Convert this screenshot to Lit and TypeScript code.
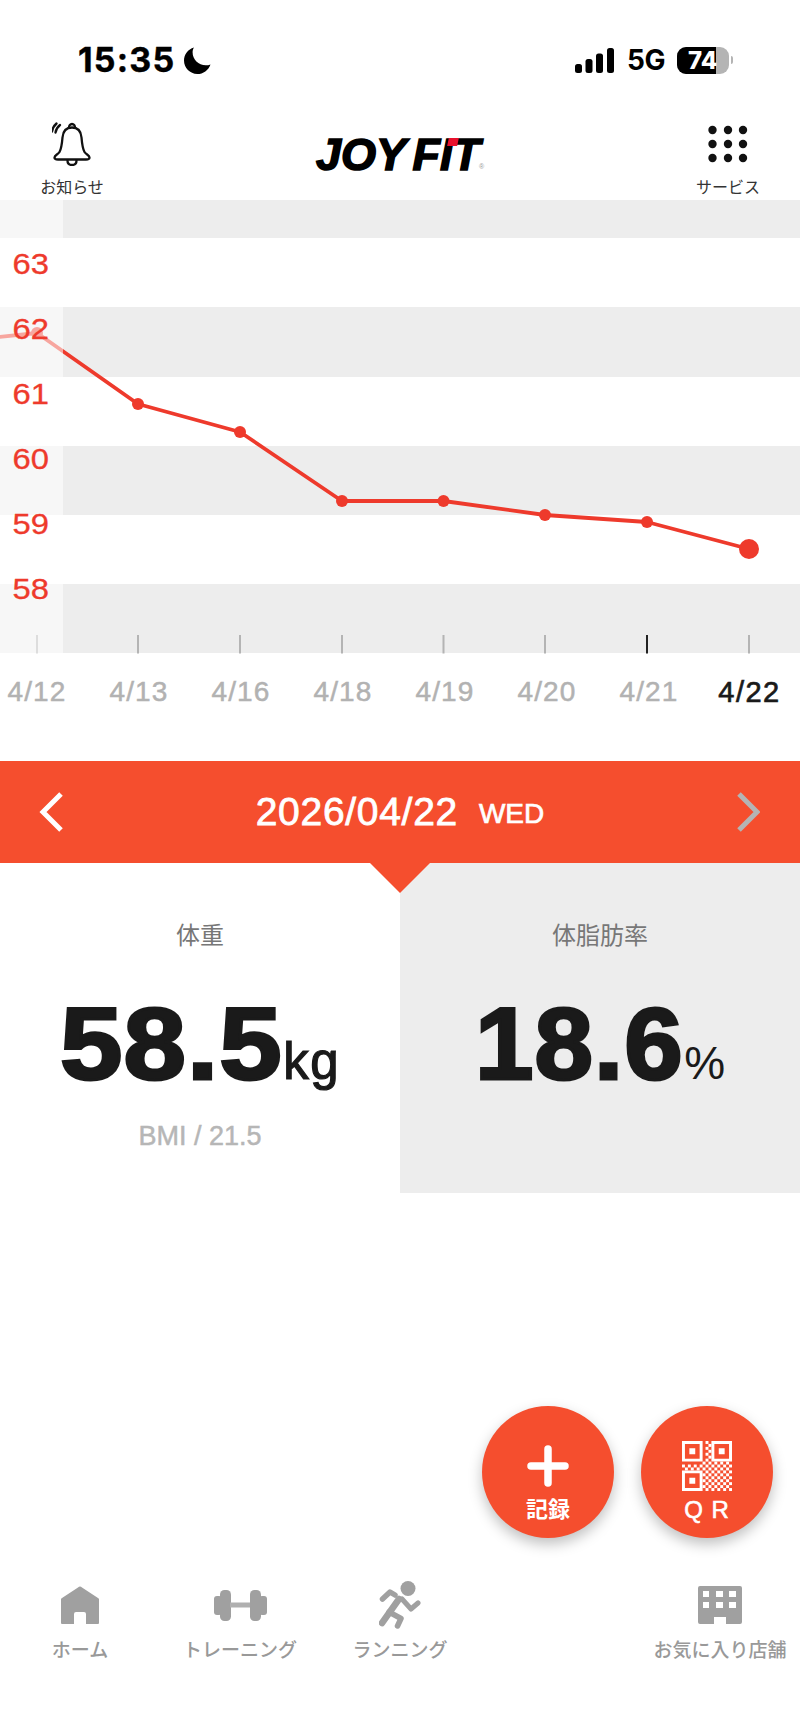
import { LitElement, html, css, svg } from "lit";
import { customElement } from "lit/decorators.js";

const POINTS: [number, number][] = [
  [-10, 338], [37, 333], [138, 404], [240, 432], [342, 501], [443.5, 501], [545, 515], [647, 522], [749, 549],
];
const DATES = ["4/12", "4/13", "4/16", "4/18", "4/19", "4/20", "4/21", "4/22"];
const YS = ["63", "62", "61", "60", "59", "58"];

function qrCells() {
  const n = 17;
  const cells: [number, number][] = [];
  const finder = (x: number, y: number) => x < 7 && y < 7;
  for (let y = 0; y < n; y++) {
    for (let x = 0; x < n; x++) {
      if (finder(x, y) || finder(n - 1 - x, y) || finder(x, n - 1 - y)) continue;
      if (y < 7 || x < 7 ? (x + y) % 2 === 0 && (x >= 8 && x <= 9 || y >= 8 && y <= 9) : (x + y) % 2 === 0) cells.push([x, y]);
    }
  }
  return cells;
}

@customElement("app-root")
export class AppRoot extends LitElement {
  static styles = css`
    :host { display: block; font-family: "Liberation Sans", "Noto Sans CJK JP", sans-serif; background: #fff; }
    .page { position: relative; height: 1734px; overflow: hidden; display: flex; flex-direction: column; background: #fff; }
    .status { height: 100px; box-sizing: border-box; padding: 44px 67px 0 78px; display: flex; align-items: flex-start; }
    .time { font: 700 34px/32px Inter, sans-serif; color: #000; letter-spacing: 1.2px; -webkit-text-stroke: .4px #000; }
    .moon { margin-left: 9px; margin-top: 3px; }
    .right { margin-left: auto; display: flex; align-items: center; height: 32px; }
    .net { font: 700 28px/32px Inter, sans-serif; color: #000; margin: 0 12px 0 13px; letter-spacing: -0.5px; }
    .batt { width: 52px; height: 27px; border-radius: 9px; overflow: hidden; display: flex; background: #b4b4b4; position: relative; }
    .batt-fill { width: 39px; background: #000; }
    .batt-num { position: absolute; left: 11px; top: 0; font: 800 24px/27px Inter, sans-serif; color: #fff; }
    .nub { width: 2px; height: 8px; background: #b4b4b4; border-radius: 0 2px 2px 0; margin-left: 2px; }

    .nav { height: 100px; display: grid; grid-template-columns: 144px 1fr 144px; }
    .nav-item { display: flex; flex-direction: column; align-items: center; font: 400 16px/20px "Noto Sans CJK JP", sans-serif; color: #333; padding-top: 22px; box-sizing: border-box; }
    .nav-item span { margin-top: 10px; }
    .nav-icon { height: 44px; display: block; }
    .nav-logo { display: flex; justify-content: center; padding: 31px 4px 0 0; }
    .logo { position: relative; font: italic 700 45px/48px "Liberation Sans", sans-serif; color: #000; -webkit-text-stroke: 1.6px #000; word-spacing: -5px; height: 48px; }
    .logo-red { position: absolute; left: 132px; top: 7px; width: 10px; height: 8px; background: #e8112d; transform: skewX(-12deg); }
    .logo-r { position: absolute; left: 163px; top: 32px; font: 400 7px/8px "Liberation Sans", sans-serif; color: #999; -webkit-text-stroke: 0; }

    .chart { position: relative; height: 454px; }
    .bands { display: flex; flex-direction: column; height: 100%; }
    .band { height: 69.2px; flex: none; }
    .band.first { height: 38.2px; }
    .band.gray { background: #ededed; }
    .ticks-svg { position: absolute; left: 0; top: 0; }
    .axis { position: absolute; left: 0; top: 0; bottom: 0; width: 63px; background: rgba(255,255,255,.55); box-sizing: border-box; padding-top: 32px; }
    .axis div { height: 65px; line-height: 65px; width: 49px; text-align: right; font-size: 29px; color: #ee3a2c; -webkit-text-stroke: .3px #ee3a2c; transform: scaleX(1.13); transform-origin: right center; }

    .dates { height: 107px; display: grid; grid-template-columns: repeat(8, 102px); margin-left: -14px; width: 816px; padding-top: 19px; box-sizing: border-box; }
    .dates div { text-align: center; font-size: 28px; line-height: 38px; letter-spacing: 1.1px; color: #b2b2b2; -webkit-text-stroke: .5px #b2b2b2; }
    .dates div.on { color: #1a1a1a; font-size: 29px; letter-spacing: 1.5px; margin-left: -3px; -webkit-text-stroke: .7px #1a1a1a; }

    .bar { height: 102px; background: #f54e2e; display: flex; align-items: center; justify-content: center; position: relative; color: #fff; }
    .bar-date { font-size: 39px; letter-spacing: .7px; -webkit-text-stroke: .8px #fff; }
    .bar-day { font-size: 28px; margin-left: 21px; margin-top: 4px; -webkit-text-stroke: .7px #fff; }
    .chev { position: absolute; top: 31px; }
    .chev.l { left: 38px; }
    .chev.r { right: 40px; }
    .arrow { position: absolute; left: 370px; top: 102px; width: 0; height: 0; border: solid transparent; border-width: 30px 30px 0 30px; border-top-color: #f54e2e; }

    .panels { display: grid; grid-template-columns: 400px 400px; height: 330px; }
    .panel { display: flex; flex-direction: column; align-items: center; padding-top: 59px; box-sizing: border-box; }
    .panel.gray { background: #ededed; }
    .panel-label { font: 400 24px/24px "Noto Sans CJK JP", sans-serif; color: #777; height: 24px; }
    .value { margin-top: 39px; display: flex; align-items: baseline; color: #1a1a1a; height: 118px; }
    .num { display: inline-block; font-size: 102px; line-height: 118px; font-weight: 700; letter-spacing: 1px; -webkit-text-stroke: 3px #1a1a1a; transform: scaleX(1.03); transform-origin: left center; margin-right: 7px; }
    .num.wide { transform: scaleX(1.1); margin-right: 21px; }
    .unit-kg { font-size: 51px; letter-spacing: 1.5px; -webkit-text-stroke: 1.2px #1a1a1a; }
    .unit-pc { font-size: 46px; margin-left: 0; }
    .bmi { margin-top: 18px; font-size: 27px; line-height: 30px; color: #b6b6b6; -webkit-text-stroke: .5px #b6b6b6; }

    .spacer { flex: 1; }
    .fab { position: absolute; top: 1406px; width: 132px; height: 132px; border-radius: 50%; background: #f54e2e; box-shadow: 0 6px 14px rgba(0,0,0,.25); color: #fff; display: flex; flex-direction: column; align-items: center; box-sizing: border-box; }
    .fab.a { left: 482px; padding-top: 39px; }
    .fab.b { left: 641px; padding-top: 35px; }
    .fab-label { font: 700 22px/24px "Noto Sans CJK JP", sans-serif; margin-top: 8px; }
    .fab-label.qr { font: 400 24px/24px "Liberation Sans", sans-serif; -webkit-text-stroke: .6px #fff; margin-top: 7px; letter-spacing: 1px; word-spacing: 0; }
    .fab svg { display: block; }

    .tabs { height: 154px; display: grid; grid-template-columns: repeat(5, 160px); box-sizing: border-box; }
    .tab { display: flex; flex-direction: column; align-items: center; }
    .tab-icon { height: 50px; display: flex; align-items: center; justify-content: center; }
    .tab-icon svg { display: block; }
    .tab span { font: 500 19px/24px "Noto Sans CJK JP", sans-serif; color: #999; white-space: nowrap; margin-top: 7px; }
  `;

  private chart() {
    const pts = POINTS.map((p) => p.join(",")).join(" ");
    return html`<svg class="ticks-svg" width="800" height="454" viewBox="0 200 800 454">
      ${POINTS.slice(1).map(([x], i) =>
        svg`<rect x=${x - 1} y="635" width="2" height="18.500" fill=${i === 6 ? "#222" : "#b4b4b4"}></rect>`
      )}
      <polyline points=${pts} fill="none" stroke="#ee3a2c" stroke-width="3.8" stroke-linejoin="round"></polyline>
      ${POINTS.slice(1, 8).map(([x, y]) => svg`<circle cx=${x} cy=${y} r="6" fill="#ee3a2c"></circle>`)}
      <circle cx="749" cy="549" r="10" fill="#ee3a2c"></circle>
    </svg>`;
  }

  render() {
    return html`<div class="page">
      <div class="status">
        <div class="time">15:35</div>
        <svg class="moon" width="27" height="27" viewBox="0 0 27 27"><path d="M10 0.5C3.9 2.2 0 7.6 0 13.6 0 20.9 5.9 27 13.3 27c5.9 0 11.2-3.8 13.2-9.6-1.5.6-3 .9-4.6.9-7.5 0-13.3-5.8-13.3-13 0-1.7.5-3.400 1.400-4.800z" fill="#000"></path></svg>
        <div class="right">
          <svg width="39" height="25" viewBox="0 0 39 25" fill="#000">
            <rect x="0" y="16" width="7" height="9" rx="2.500"></rect>
            <rect x="10.500" y="11" width="7" height="14" rx="2.500"></rect>
            <rect x="21" y="5.500" width="7" height="19.500" rx="2.500"></rect>
            <rect x="32" y="0" width="7" height="25" rx="2.500"></rect>
          </svg>
          <div class="net">5G</div>
          <div class="batt"><div class="batt-fill"></div><div class="batt-num">74</div></div>
          <div class="nub"></div>
        </div>
      </div>

      <div class="nav">
        <div class="nav-item">
          <svg class="nav-icon" width="40" height="44" viewBox="1 0 40 44" fill="none" stroke="#111" stroke-width="2.300" stroke-linecap="round" stroke-linejoin="round">
            <path d="M21 5.500c-6 0-9 4-9.500 10-.5 6-1 11-3 14.500-1.500 2.500-5 3-5 5.500 0 1.800 1.500 2 3.500 2h28c2 0 3.500-.2 3.500-2 0-2.500-3.500-3-5-5.500-2-3.500-2.500-8.500-3-14.500-.5-6-3.500-10-9.500-10z"></path>
            <path d="M18 5.500c0-1.800 1.200-3.500 3-3.500s3 1.700 3 3.500"></path>
            <path d="M16.500 38.500c0 3 2 4.500 4.500 4.500s4.500-1.500 4.500-4.500"></path>
            <path d="M9 3c-2.500 2-4 4.500-4.500 7.500M5.500 1.500C2.800 3.800 1.500 6.500 1 9.500"></path>
          </svg>
          <span>お知らせ</span>
        </div>
        <div class="nav-logo">
          <div class="logo">JOY FIT<i class="logo-red"></i><i class="logo-r">®</i></div>
        </div>
        <div class="nav-item">
          <svg class="nav-icon" width="40" height="44" viewBox="0 0 40 44" fill="#111">
            ${[6, 20, 34].map((cy) => [4.500, 20, 35].map((cx) => svg`<circle cx=${cx} cy=${cy + 2} r="4.200"></circle>`))}
          </svg>
          <span>サービス</span>
        </div>
      </div>

      <div class="chart">
        <div class="bands">
          <div class="band first gray"></div>
          ${[0, 1, 2, 3, 4, 5].map((i) => html`<div class="band ${i % 2 ? "gray" : ""}"></div>`)}
        </div>
        ${this.chart()}
        <div class="axis">${YS.map((y) => html`<div>${y}</div>`)}</div>
      </div>

      <div class="dates">
        ${DATES.map((d, i) => html`<div class=${i === 7 ? "on" : ""}>${d}</div>`)}
      </div>

      <div class="bar">
        <svg class="chev l" width="26" height="40" viewBox="0 0 26 40" fill="none" stroke="#fff" stroke-width="5"><path d="M23 2 5 20l18 18"></path></svg>
        <span class="bar-date">2026/04/22</span><span class="bar-day">WED</span>
        <svg class="chev r" width="24" height="40" viewBox="0 0 24 40" fill="none" stroke="#b4b4b4" stroke-width="5"><path d="M3 2l18 18L3 38"></path></svg>
        <div class="arrow"></div>
      </div>

      <div class="panels">
        <div class="panel">
          <div class="panel-label">体重</div>
          <div class="value"><span class="num wide">58.5</span><span class="unit-kg">kg</span></div>
          <div class="bmi">BMI / 21.5</div>
        </div>
        <div class="panel gray">
          <div class="panel-label">体脂肪率</div>
          <div class="value"><span class="num">18.6</span><span class="unit-pc">%</span></div>
        </div>
      </div>

      <div class="spacer"></div>

      <div class="tabs">
        <div class="tab">
          <div class="tab-icon"><svg width="38" height="38" viewBox="0 0 38 38" fill="#a0a0a0"><path d="M17 1.500 a3 3 0 0 1 4 0 L37 12 a2 2 0 0 1 1 2 V37 a1 1 0 0 1-1 1 H25 V28 a2 2 0 0 0-2-2 H15 a2 2 0 0 0-2 2 V38 H1 a1 1 0 0 1-1-1 V14 a2 2 0 0 1 1-2z"></path></svg></div>
          <span>ホーム</span>
        </div>
        <div class="tab">
          <div class="tab-icon"><svg width="53" height="31" viewBox="0 0 53 31" fill="#a0a0a0">
            <rect x="0" y="6" width="8" height="19" rx="3"></rect><rect x="6" y="0" width="11" height="31" rx="4.500"></rect><rect x="16" y="12.500" width="21" height="5" fill="#b0b0b0"></rect><rect x="36" y="0" width="11" height="31" rx="4.500"></rect><rect x="45" y="6" width="8" height="19" rx="3"></rect>
          </svg></div>
          <span>トレーニング</span>
        </div>
        <div class="tab">
          <div class="tab-icon"><svg width="42" height="48" viewBox="0 0 42 48" fill="none" stroke="#a0a0a0" stroke-linecap="round" stroke-linejoin="round">
            <circle cx="29" cy="7.500" r="7.500" fill="#a0a0a0" stroke="none"></circle>
            <path d="M3.500 18 11 11l5 3" stroke-width="5.500"></path>
            <path d="M20 18 3 42" stroke-width="6.500"></path>
            <path d="M10 31l12 6.500L18.500 45" stroke-width="5.500"></path>
            <path d="M23 18l9 10 7-6" stroke-width="5"></path>
          </svg></div>
          <span>ランニング</span>
        </div>
        <div></div>
        <div class="tab">
          <div class="tab-icon"><svg width="44" height="38" viewBox="0 0 44 38" fill="#a0a0a0" fill-rule="evenodd"><path d="M2 0h40a2 2 0 0 1 2 2v34a2 2 0 0 1-2 2H28V31H16v7H2a2 2 0 0 1-2-2V2a2 2 0 0 1 2-2zM5 5v6h6V5zM18 5v6h7V5zM31 5v6h7V5zM5 16v6h6v-6zM18 16v6h7v-6zM31 16v6h7v-6z"></path></svg></div>
          <span>お気に入り店舗</span>
        </div>
      </div>

      <div class="fab a">
        <svg width="42" height="42" viewBox="0 0 42 42" stroke="#fff" stroke-width="7.500" stroke-linecap="round"><path d="M21 4v34M4 21h34"></path></svg>
        <div class="fab-label">記録</div>
      </div>
      <div class="fab b">
        <svg width="50" height="50" viewBox="0 0 17 17" fill="#fff">
          <path fill-rule="evenodd" d="M0 0h7v7H0zM1 1v5h5V1zM10 0h7v7h-7zM11 1v5h5V1zM0 10h7v7H0zM1 11v5h5v-5z"></path>
          <path d="M2.500 2.500h2v2h-2zM12.500 2.500h2v2h-2zM2.500 12.500h2v2h-2z"></path>
          ${qrCells().map(([x, y]) => svg`<rect x=${x} y=${y} width="1" height="1"></rect>`)}
        </svg>
        <div class="fab-label qr">Q R</div>
      </div>
    </div>`;
  }
}
